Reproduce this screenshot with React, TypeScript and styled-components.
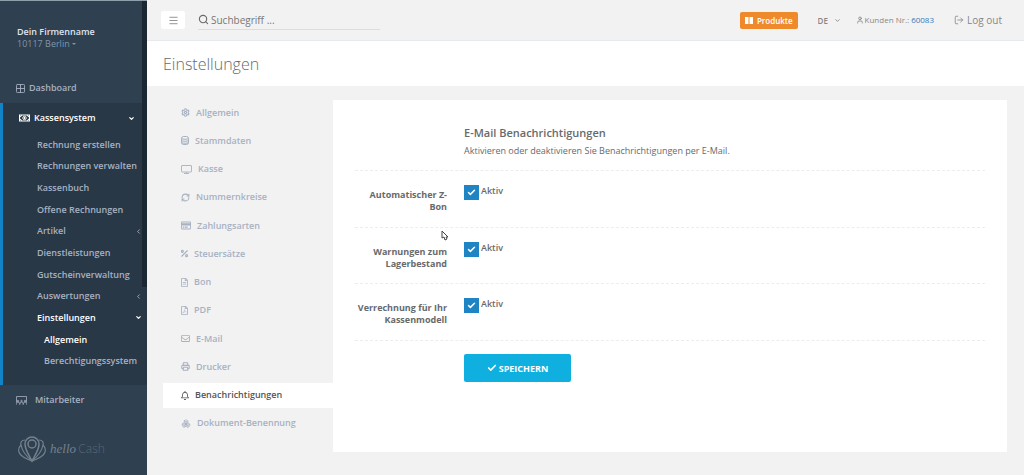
import React from "react";
import styled, { createGlobalStyle } from "styled-components";
import {
  Menu, Search, ChevronDown, ChevronLeft, User, LogOut, Settings, RefreshCw,
  Percent, Printer, Check, Boxes, Grid2x2,
} from "lucide-react";
import { FaRegBell, FaRegEnvelope, FaRegFileAlt, FaRegFilePdf, FaRegCreditCard } from "react-icons/fa";

const Global = createGlobalStyle`
  *, *::before, *::after { box-sizing: border-box; }
  body { margin: 0; background: #f2f2f2; font-family: "Open Sans", "Liberation Sans", sans-serif; font-size: 9px; line-height: 12px; color: #676a6c; }
  a { color: inherit; text-decoration: none; }
  ul { list-style: none; margin: 0; padding: 0; }
  h1, h2, p { margin: 0; }
  button, input, select { font-family: inherit; }
  svg { display: block; flex: none; }
`;

const Page = styled.div`
  display: flex;
  min-height: 100vh;
`;

const Sidebar = styled.nav`
  position: relative;
  display: flex;
  flex-direction: column;
  width: 147px;
  flex: none;
  background: #2f4050;
  border-top: 1px solid #8fa0ad;
  color: #a7b1c2;
  font-weight: 600;
`;

const ScrollThumb = styled.div`
  position: absolute;
  top: 0;
  right: 0;
  width: 5px;
  height: 286px;
  background: #1b2733;
`;

const Company = styled.div`
  padding: 25px 17px 0;
  height: 72px;
  line-height: 12px;
`;

const CompanyName = styled.div`
  color: #dfe4ed;
`;

const CompanyPlace = styled.a`
  display: flex;
  align-items: center;
  gap: 2px;
  color: #8095a8;
  font-weight: 400;
`;

const Caret = styled.span`
  border: 2px solid transparent;
  border-top-color: currentColor;
  border-bottom: 0;
`;

const MainLink = styled.a<{ $active?: boolean }>`
  display: flex;
  align-items: center;
  gap: 4px;
  height: 30px;
  padding: 0 12px 0 16px;
  color: ${(p) => (p.$active ? "#ffffff" : "#a7b1c2")};
`;

const Group = styled.div`
  padding-bottom: 13px;
  border-left: 3px solid #1084c7;
  background: #293846;
`;

const Spacer = styled.span`
  flex: 1;
`;

const SubList = styled.ul`
  display: grid;
  grid-auto-rows: 1fr;
  min-height: 238px;
  margin-top: 1px;
`;

const SubLink = styled.a<{ $active?: boolean; $deep?: boolean }>`
  display: flex;
  align-items: center;
  justify-content: space-between;
  height: 100%;
  padding: 0 5px 0 ${(p) => (p.$deep ? 41 : 34)}px;
  color: ${(p) => (p.$active ? "#ffffff" : "#a7b1c2")};
`;

const Brand = styled.a`
  display: flex;
  align-items: center;
  gap: 4px;
  padding: 20px 18px;
  color: #75818c;
`;

const BrandScript = styled.span`
  font: italic 13px/18px "Liberation Serif", serif;
`;

const BrandPlain = styled.span`
  font-size: 12px;
  line-height: 18px;
  font-weight: 300;
  color: #596876;
`;

const Main = styled.main`
  flex: 1;
  min-width: 0;
`;

const TopBar = styled.header`
  display: flex;
  align-items: center;
  height: 41px;
  padding: 0 22px 0 14px;
  border-bottom: 1px solid #e7eaec;
`;

const MenuButton = styled.button`
  display: grid;
  place-items: center;
  width: 24px;
  height: 18px;
  padding: 0;
  border: 0;
  border-radius: 2px;
  background: #ffffff;
  color: #8b8b8b;
`;

const SearchBox = styled.label`
  display: flex;
  align-items: center;
  gap: 2px;
  width: 182px;
  height: 20px;
  margin-left: 13px;
  border-bottom: 1px solid #dddddd;
`;

const SearchInput = styled.input`
  flex: 1;
  min-width: 0;
  padding: 0;
  border: 0;
  outline: 0;
  background: transparent;
  font-size: 10px;
  color: #676a6c;
  &::placeholder { color: #777777; opacity: 1; }
`;

const ProductsButton = styled.button`
  display: flex;
  align-items: center;
  gap: 4px;
  height: 17px;
  padding: 0 5px;
  border: 0;
  border-radius: 2px;
  background: #ee8a2c;
  color: #ffffff;
  font-size: 8px;
  font-weight: 600;
`;

const Language = styled.label`
  display: flex;
  align-items: center;
  margin-left: 20px;
  color: #888888;
`;

const LanguageSelect = styled.select`
  appearance: none;
  width: 16px;
  padding: 0;
  border: 0;
  background: transparent;
  color: #888888;
  font-size: 8px;
  font-weight: 600;
`;

const Customer = styled.div`
  display: flex;
  align-items: center;
  gap: 1px;
  margin-left: 15px;
  font-size: 8px;
  color: #888888;
  a { margin-left: 1px; color: #337ab7; }
`;

const Logout = styled.a`
  display: flex;
  align-items: center;
  gap: 3px;
  margin-left: 20px;
  font-size: 10px;
  color: #85888a;
`;

const TitleBar = styled.div`
  display: flex;
  align-items: center;
  height: 45px;
  padding: 0 16px;
  background: #ffffff;
`;

const Title = styled.h1`
  font-size: 16px;
  line-height: 22px;
  font-weight: 300;
`;

const Content = styled.div`
  display: flex;
  align-items: flex-start;
  padding: 14px 17px 23px 16px;
`;

const Tabs = styled.ul`
  display: grid;
  grid-auto-rows: 1fr;
  width: 170px;
  min-height: 339px;
  flex: none;
`;

const Tab = styled.a<{ $active?: boolean; $iconWidth: number }>`
  display: flex;
  align-items: center;
  gap: 6px;
  height: 25px;
  padding-left: 18px;
  font-weight: 600;
  background: ${(p) => (p.$active ? "#ffffff" : "transparent")};
  color: ${(p) => (p.$active ? "#555555" : "#a7b1c2")};
  svg {
    width: ${(p) => p.$iconWidth}px;
    height: 9px;
  }
`;

const Panel = styled.form`
  flex: 1;
  min-width: 0;
  min-height: 352px;
  padding: 26px 22px;
  background: #ffffff;
`;

const Row = styled.div`
  display: grid;
  grid-template-columns: 92px 1fr;
  column-gap: 17px;
`;

const Intro = styled(Row)`
  min-height: 44px;
`;

const PanelTitle = styled.h2`
  font-size: 11px;
  line-height: 14px;
  font-weight: 600;
`;

const PanelText = styled.p`
  margin-top: 5px;
`;

const SettingList = styled.div`
  display: grid;
  grid-auto-rows: 1fr;
  min-height: 170px;
`;

const Setting = styled(Row)`
  padding-top: 14px;
  border-top: 1px dashed #ebedef;
`;

const SettingName = styled.div`
  padding-top: 4px;
  text-align: right;
  font-weight: 700;
`;

const CheckLabel = styled.label`
  display: flex;
  align-items: flex-start;
  gap: 2px;
  height: 15px;
  font-weight: 600;
`;

const CheckWrap = styled.span`
  display: grid;
  place-items: center;
  width: 15px;
  height: 15px;
  color: #ffffff;
  > * { grid-area: 1 / 1; }
  svg { z-index: 1; pointer-events: none; }
`;

const CheckInput = styled.input`
  appearance: none;
  width: 15px;
  height: 15px;
  margin: 0;
  background: #b5bcc2;
  &:checked { background: #1f84c4; }
`;

const Actions = styled(Row)`
  padding-top: 13px;
  border-top: 1px dashed #ebedef;
`;

const SaveButton = styled.button`
  grid-column: 2;
  display: flex;
  align-items: center;
  justify-content: center;
  gap: 2px;
  width: 107px;
  height: 28px;
  padding: 0;
  border: 0;
  border-radius: 2px;
  background: #0fb0e0;
  color: #ffffff;
  font-size: 9px;
  font-weight: 700;
`;

const Pointer = styled.svg`
  position: absolute;
  left: 441px;
  top: 230px;
`;

const subItems: { name: string; arrow?: "left" | "down"; active?: boolean; deep?: boolean }[] = [
  { name: "Rechnung erstellen" },
  { name: "Rechnungen verwalten" },
  { name: "Kassenbuch" },
  { name: "Offene Rechnungen" },
  { name: "Artikel", arrow: "left" },
  { name: "Dienstleistungen" },
  { name: "Gutscheinverwaltung" },
  { name: "Auswertungen", arrow: "left" },
  { name: "Einstellungen", arrow: "down", active: true },
  { name: "Allgemein", active: true, deep: true },
  { name: "Berechtigungssystem", deep: true },
];

function DatabaseIcon() {
  return (
    <svg viewBox="0 0 16 18" fill="none" stroke="currentColor" strokeWidth="2">
      <rect x="1" y="1" width="14" height="16" rx="4" />
      <path d="M1 5c3 2 11 2 14 0M1 9c3 2 11 2 14 0M1 13c3 2 11 2 14 0" />
    </svg>
  );
}

function DisplayIcon() {
  return (
    <svg viewBox="0 0 22 18" fill="none" stroke="currentColor" strokeWidth="1.8">
      <rect x="1" y="1" width="20" height="13" rx="1" />
      <path d="M11 14v3M6 17h10" />
    </svg>
  );
}

function BanknoteIcon() {
  return (
    <svg width="11" height="8" viewBox="0 0 22 16" fill="none" stroke="currentColor" strokeWidth="2">
      <rect x="1" y="2" width="20" height="12" />
      <circle cx="11" cy="8" r="3.4" />
      <path d="M1 6a4 4 0 0 0 4-4M17 2a4 4 0 0 0 4 4M1 10a4 4 0 0 1 4 4M17 14a4 4 0 0 1 4-4M11 6v4" />
    </svg>
  );
}

function StaffIcon() {
  return (
    <svg width="11" height="9" viewBox="0 0 22 18" fill="none" stroke="currentColor" strokeWidth="1.6">
      <path d="M1 13V1h20v12M1 17v-2a3 3 0 0 1 6 0v2M8 17v-2a3 3 0 0 1 6 0v2M15 17v-2a3 3 0 0 1 6 0v2" />
      <circle cx="4" cy="10" r="1.5" />
      <circle cx="11" cy="10" r="1.5" />
      <circle cx="18" cy="10" r="1.5" />
    </svg>
  );
}

function BrandMark() {
  return (
    <svg width="28" height="28" viewBox="0 0 28 28" fill="none" stroke="currentColor" strokeWidth="1.2">
      <path d="M14 26C11 20 7 15 7 9a7 7 0 0 1 14 0c0 6-4 11-7 17Z" strokeWidth="1.5" />
      <circle cx="14" cy="9" r="4" strokeWidth="1.5" />
      <path d="M7 5C4 5 2 7 3 10c1 6 5 11 11 16M21 5c3 0 5 2 4 5-1 6-5 11-11 16" />
      <path d="M3 10c-2 2-3 4-2 7 1 4 6 6 13 9M25 10c2 2 3 4 2 7-1 4-6 6-13 9" />
    </svg>
  );
}

const tabs: { name: string; width: number; icon: React.ReactNode; active?: boolean }[] = [
  { name: "Allgemein", width: 9, icon: <Settings strokeWidth={2.8} /> },
  { name: "Stammdaten", width: 8, icon: <DatabaseIcon /> },
  { name: "Kasse", width: 11, icon: <DisplayIcon /> },
  { name: "Nummernkreise", width: 9, icon: <RefreshCw strokeWidth={2.8} /> },
  { name: "Zahlungsarten", width: 10, icon: <FaRegCreditCard /> },
  { name: "Steuersätze", width: 7, icon: <Percent viewBox="3 2 18 20" strokeWidth={3} /> },
  { name: "Bon", width: 7, icon: <FaRegFileAlt /> },
  { name: "PDF", width: 7, icon: <FaRegFilePdf /> },
  { name: "E-Mail", width: 9, icon: <FaRegEnvelope /> },
  { name: "Drucker", width: 9, icon: <Printer strokeWidth={2.8} /> },
  { name: "Benachrichtigungen", width: 8, icon: <FaRegBell />, active: true },
  { name: "Dokument-Benennung", width: 10, icon: <Boxes /> },
];

const settings = ["Automatischer Z-Bon", "Warnungen zum Lagerbestand", "Verrechnung für Ihr Kassenmodell"];

export default function App() {
  return (
    <>
      <Global />
      <Page>
        <Sidebar>
          <ScrollThumb />
          <Company>
            <CompanyName>Dein Firmenname</CompanyName>
            <CompanyPlace href="#firma">10117 Berlin <Caret /></CompanyPlace>
          </Company>
          <MainLink href="#dashboard"><Grid2x2 width={9} height={9} viewBox="2 2 20 20" />Dashboard</MainLink>
          <Group>
            <MainLink $active href="#kasse">
              <BanknoteIcon />Kassensystem<Spacer /><ChevronDown size={7} strokeWidth={4} />
            </MainLink>
            <SubList>
              {subItems.map((item) => (
                <li key={item.name}>
                  <SubLink href="#" $active={item.active} $deep={item.deep}>
                    {item.name}
                    {item.arrow === "left" && <ChevronLeft size={7} strokeWidth={3} />}
                    {item.arrow === "down" && <ChevronDown size={7} strokeWidth={4} />}
                  </SubLink>
                </li>
              ))}
            </SubList>
          </Group>
          <MainLink href="#mitarbeiter"><StaffIcon /><span />Mitarbeiter</MainLink>
          <Brand href="#start">
            <BrandMark />
            <span><BrandScript>hello</BrandScript> <BrandPlain>Cash</BrandPlain></span>
          </Brand>
        </Sidebar>
        <Main>
          <TopBar>
            <MenuButton type="button" aria-label="Menü"><Menu size={11} /></MenuButton>
            <SearchBox>
              <Search size={11} strokeWidth={2.4} />
              <SearchInput aria-label="Suche" placeholder="Suchbegriff ..." />
            </SearchBox>
            <Spacer />
            <ProductsButton type="button">
              <svg width="8" height="7" viewBox="0 0 8 7" fill="currentColor"><path d="M0 0h3.5v7H0zM4.5 0H8v7H4.5z" /></svg>
              Produkte
            </ProductsButton>
            <Language>
              <LanguageSelect aria-label="Sprache"><option>DE</option></LanguageSelect>
              <ChevronDown size={7} strokeWidth={3} />
            </Language>
            <Customer><User size={8} strokeWidth={2.6} />Kunden Nr.: <a href="#kunde">60083</a></Customer>
            <Logout href="#logout"><LogOut size={10} />Log out</Logout>
          </TopBar>
          <TitleBar><Title>Einstellungen</Title></TitleBar>
          <Content>
            <Tabs>
              {tabs.map(({ name, width, icon, active }) => (
                <li key={name}>
                  <Tab href="#" $active={active} $iconWidth={width}>{icon}{name}</Tab>
                </li>
              ))}
            </Tabs>
            <Panel>
              <Intro>
                <span />
                <div>
                  <PanelTitle>E-Mail Benachrichtigungen</PanelTitle>
                  <PanelText>Aktivieren oder deaktivieren Sie Benachrichtigungen per E-Mail.</PanelText>
                </div>
              </Intro>
              <SettingList>
                {settings.map((name) => (
                  <Setting key={name}>
                    <SettingName>{name}</SettingName>
                    <CheckLabel>
                      <CheckWrap><CheckInput type="checkbox" defaultChecked /><Check size={9} strokeWidth={4} /></CheckWrap>
                      Aktiv
                    </CheckLabel>
                  </Setting>
                ))}
              </SettingList>
              <Actions>
                <SaveButton type="button"><Check size={10} strokeWidth={4} />SPEICHERN</SaveButton>
              </Actions>
            </Panel>
          </Content>
        </Main>
      </Page>
      <Pointer width="8" height="11" viewBox="0 0 8 11" fill="#ffffff" stroke="#444444"><path d="M1 1v7l2-1 1 3 2-1-1-2h2Z" /></Pointer>
    </>
  );
}
